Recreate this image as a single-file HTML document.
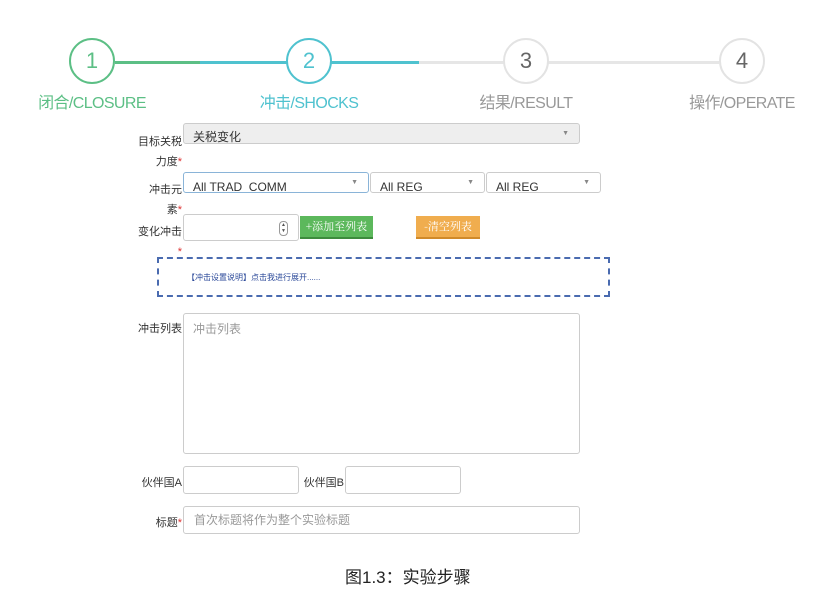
<!DOCTYPE html>
<html><head><meta charset="utf-8"><style>
body{margin:0;width:838px;height:594px;background:#fff;position:relative;overflow:hidden;font-family:"Liberation Sans","Noto Sans CJK SC",sans-serif}
.a{position:absolute}
.c{position:absolute;width:42px;height:42px;border-radius:50%;border:2px solid;background:#fff;text-align:center;line-height:42px;font-size:22px;top:38px}
.st{position:absolute;top:89px;font-size:16px;width:200px;text-align:center;letter-spacing:-0.6px}
.lb{position:absolute;font-size:11px;color:#333;text-align:right}
.r{color:#d33}
.box{position:absolute;border:1px solid #ccc;border-radius:3px;background:#fff;box-sizing:border-box}
.sel{font-size:12px;color:#333;padding-left:9px;line-height:28px;overflow:hidden}
.ar{position:absolute;right:10px;top:0;font-size:7px;color:#888;line-height:20px}
</style></head><body>
<div class="a" style="left:115px;top:61px;width:85px;height:3px;background:#5cbf85"></div>
<div class="a" style="left:200px;top:61px;width:219px;height:3px;background:#4fc2cf"></div>
<div class="a" style="left:419px;top:61px;width:300px;height:3px;background:#e6e6e6"></div>
<div class="c" style="left:69px;border-color:#5cbf85;color:#5cbf85">1</div>
<div class="c" style="left:286px;border-color:#4fc2cf;color:#4fc2cf">2</div>
<div class="c" style="left:503px;border-color:#e3e3e3;color:#666">3</div>
<div class="c" style="left:719px;border-color:#e3e3e3;color:#666">4</div>
<div class="st" style="left:-8px;color:#5cbf85">闭合/CLOSURE</div>
<div class="st" style="left:209px;color:#4fc2cf">冲击/SHOCKS</div>
<div class="st" style="left:426px;color:#999">结果/RESULT</div>
<div class="st" style="left:642px;color:#999">操作/OPERATE</div>

<div class="lb" style="left:130px;top:132px;width:52px;line-height:20px">目标关税<br>力度<span class="r">*</span></div>
<div class="box sel" style="left:183px;top:123px;width:397px;height:21px;background:#eee;line-height:26px">关税变化<span class="ar">▼</span></div>
<div class="lb" style="left:130px;top:180px;width:52px;line-height:20px">冲击元<br>素<span class="r">*</span></div>
<div class="box sel" style="left:183px;top:172px;width:186px;height:21px;border-color:#8ab4d8">All TRAD_COMM<span class="ar">▼</span></div>
<div class="box sel" style="left:370px;top:172px;width:115px;height:21px">All REG<span class="ar">▼</span></div>
<div class="box sel" style="left:486px;top:172px;width:115px;height:21px">All REG<span class="ar">▼</span></div>
<div class="lb" style="left:130px;top:222px;width:52px;line-height:20px">变化冲击<br><span class="r">*</span></div>
<div class="box" style="left:183px;top:214px;width:116px;height:27px"><span class="a" style="right:10px;top:6px;width:7px;height:13px;border:1px solid #999;border-radius:4px;font-size:5px;line-height:6px;text-align:center;color:#555">▲<br>▼</span></div>
<div class="a" style="left:300px;top:216px;width:73px;height:21px;background:#5cb85c;border-bottom:2px solid #3d8b3d;color:#fff;font-size:11px;line-height:21px;text-align:center;font-family:'Noto Serif CJK SC',serif">+添加至列表</div>
<div class="a" style="left:416px;top:216px;width:64px;height:21px;background:#f0ad4e;border-bottom:2px solid #d08a2a;color:#fff;font-size:11px;line-height:21px;text-align:center;font-family:'Noto Serif CJK SC',serif">-清空列表</div>
<div class="a" style="left:157px;top:257px;border:2px dashed #4a6bb0;font-size:8px;color:#2c4a9a;line-height:37px;padding-left:28px;box-sizing:border-box;width:453px;height:40px">【冲击设置说明】点击我进行展开......</div>
<div class="lb" style="left:130px;top:320px;width:52px">冲击列表</div>
<div class="box" style="left:183px;top:313px;width:397px;height:141px;font-size:12px;color:#999;padding:6px 0 0 9px">冲击列表</div>
<div class="lb" style="left:130px;top:474px;width:52px">伙伴国A</div>
<div class="box" style="left:183px;top:466px;width:116px;height:28px"></div>
<div class="lb" style="left:300px;top:474px;width:44px">伙伴国B</div>
<div class="box" style="left:345px;top:466px;width:116px;height:28px"></div>
<div class="lb" style="left:130px;top:514px;width:52px">标题<span class="r">*</span></div>
<div class="box" style="left:183px;top:506px;width:397px;height:28px;font-size:12px;color:#999;padding-left:10px;line-height:26px">首次标题将作为整个实验标题</div>
<div class="a" style="left:345px;top:563px;font-size:17px;color:#222">图1.3：实验步骤</div>
</body></html>
